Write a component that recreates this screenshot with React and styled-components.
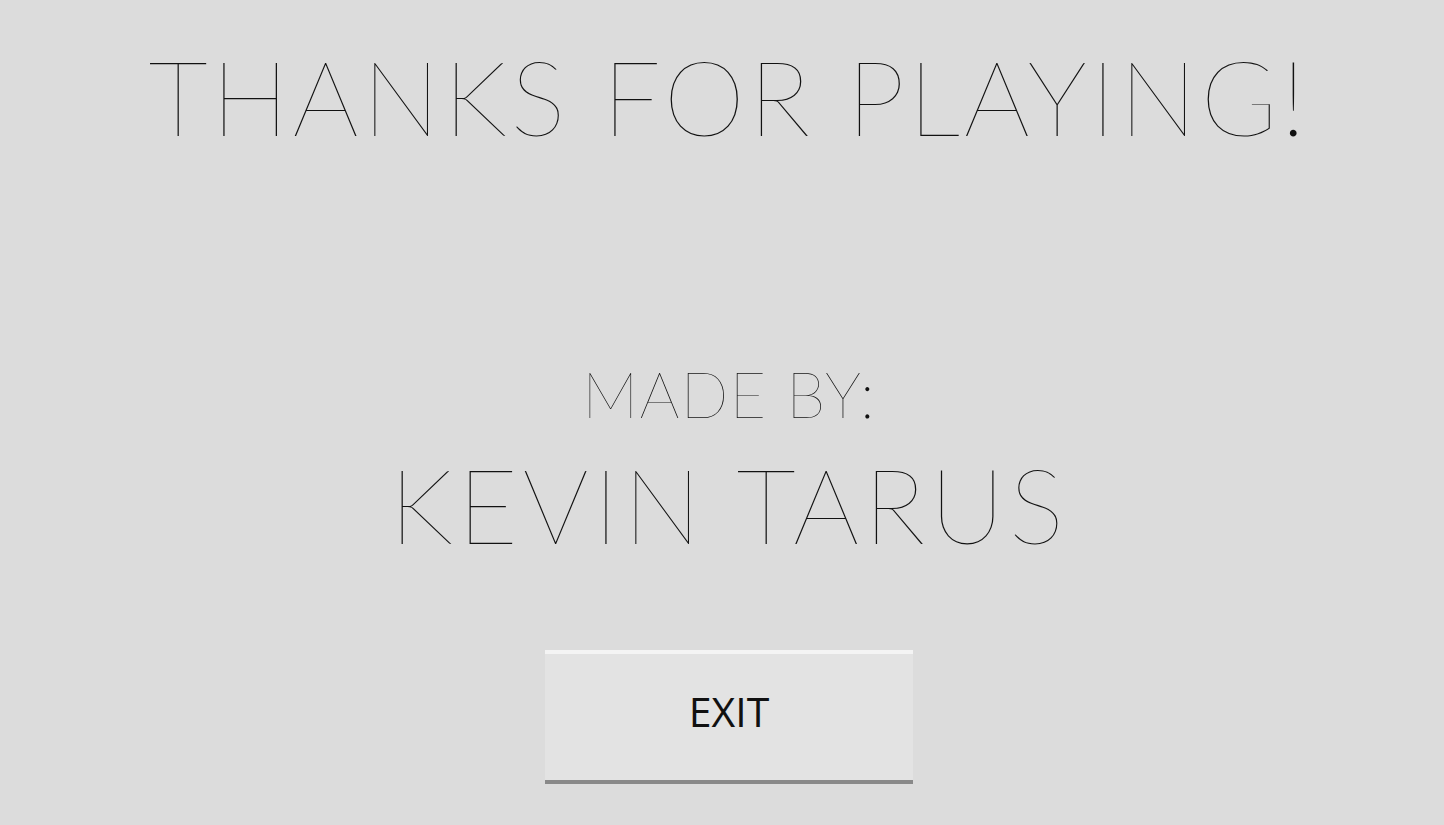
import styled, { createGlobalStyle } from "styled-components";

const GlobalStyle = createGlobalStyle`
  html, body {
    margin: 0;
    padding: 0;
    background: #dcdcdc;
  }
  body {
    font-family: "Lato", "Open Sans", sans-serif;
  }
`;

const Screen = styled.div`
  width: 1444px;
  height: 825px;
  box-sizing: border-box;
  padding-left: 14px;
  display: flex;
  flex-direction: column;
  align-items: center;
  background: #dcdcdc;
  color: #111;
  overflow: hidden;
`;

const Title = styled.h1`
  margin: 34px 0 0;
  font-family: "Lato", sans-serif;
  font-weight: 100;
  font-size: 104px;
  line-height: 124px;
  letter-spacing: 3.5px;
  white-space: nowrap;
`;

const Credits = styled.div`
  margin-top: 187px;
  display: flex;
  flex-direction: column;
  align-items: center;
`;

const Label = styled.div`
  font-family: "Lato", sans-serif;
  font-weight: ${(p) => p.weight || 100};
  font-size: ${(p) => p.size}px;
  line-height: ${(p) => p.lineHeight}px;
  letter-spacing: ${(p) => p.spacing}px;
  white-space: nowrap;
`;

const ExitButton = styled.button`
  margin-top: 84px;
  width: 368px;
  height: 134px;
  box-sizing: border-box;
  padding: 0 0 12px;
  background: #e3e3e3;
  border: none;
  border-top: 4px solid #f4f4f4;
  border-bottom: 4px solid #898989;
  font-family: "Open Sans", sans-serif;
  font-size: 41px;
  color: #111;
  cursor: pointer;
`;

export default function App() {
  return (
    <>
      <GlobalStyle />
      <Screen>
        <Title>THANKS FOR PLAYING!</Title>
        <Credits>
          <Label size={63} lineHeight={97} spacing={1}>
            MADE BY:
          </Label>
          <Label size={104} lineHeight={124} spacing={4.5}>
            KEVIN TARUS
          </Label>
        </Credits>
        <ExitButton>EXIT</ExitButton>
      </Screen>
    </>
  );
}
